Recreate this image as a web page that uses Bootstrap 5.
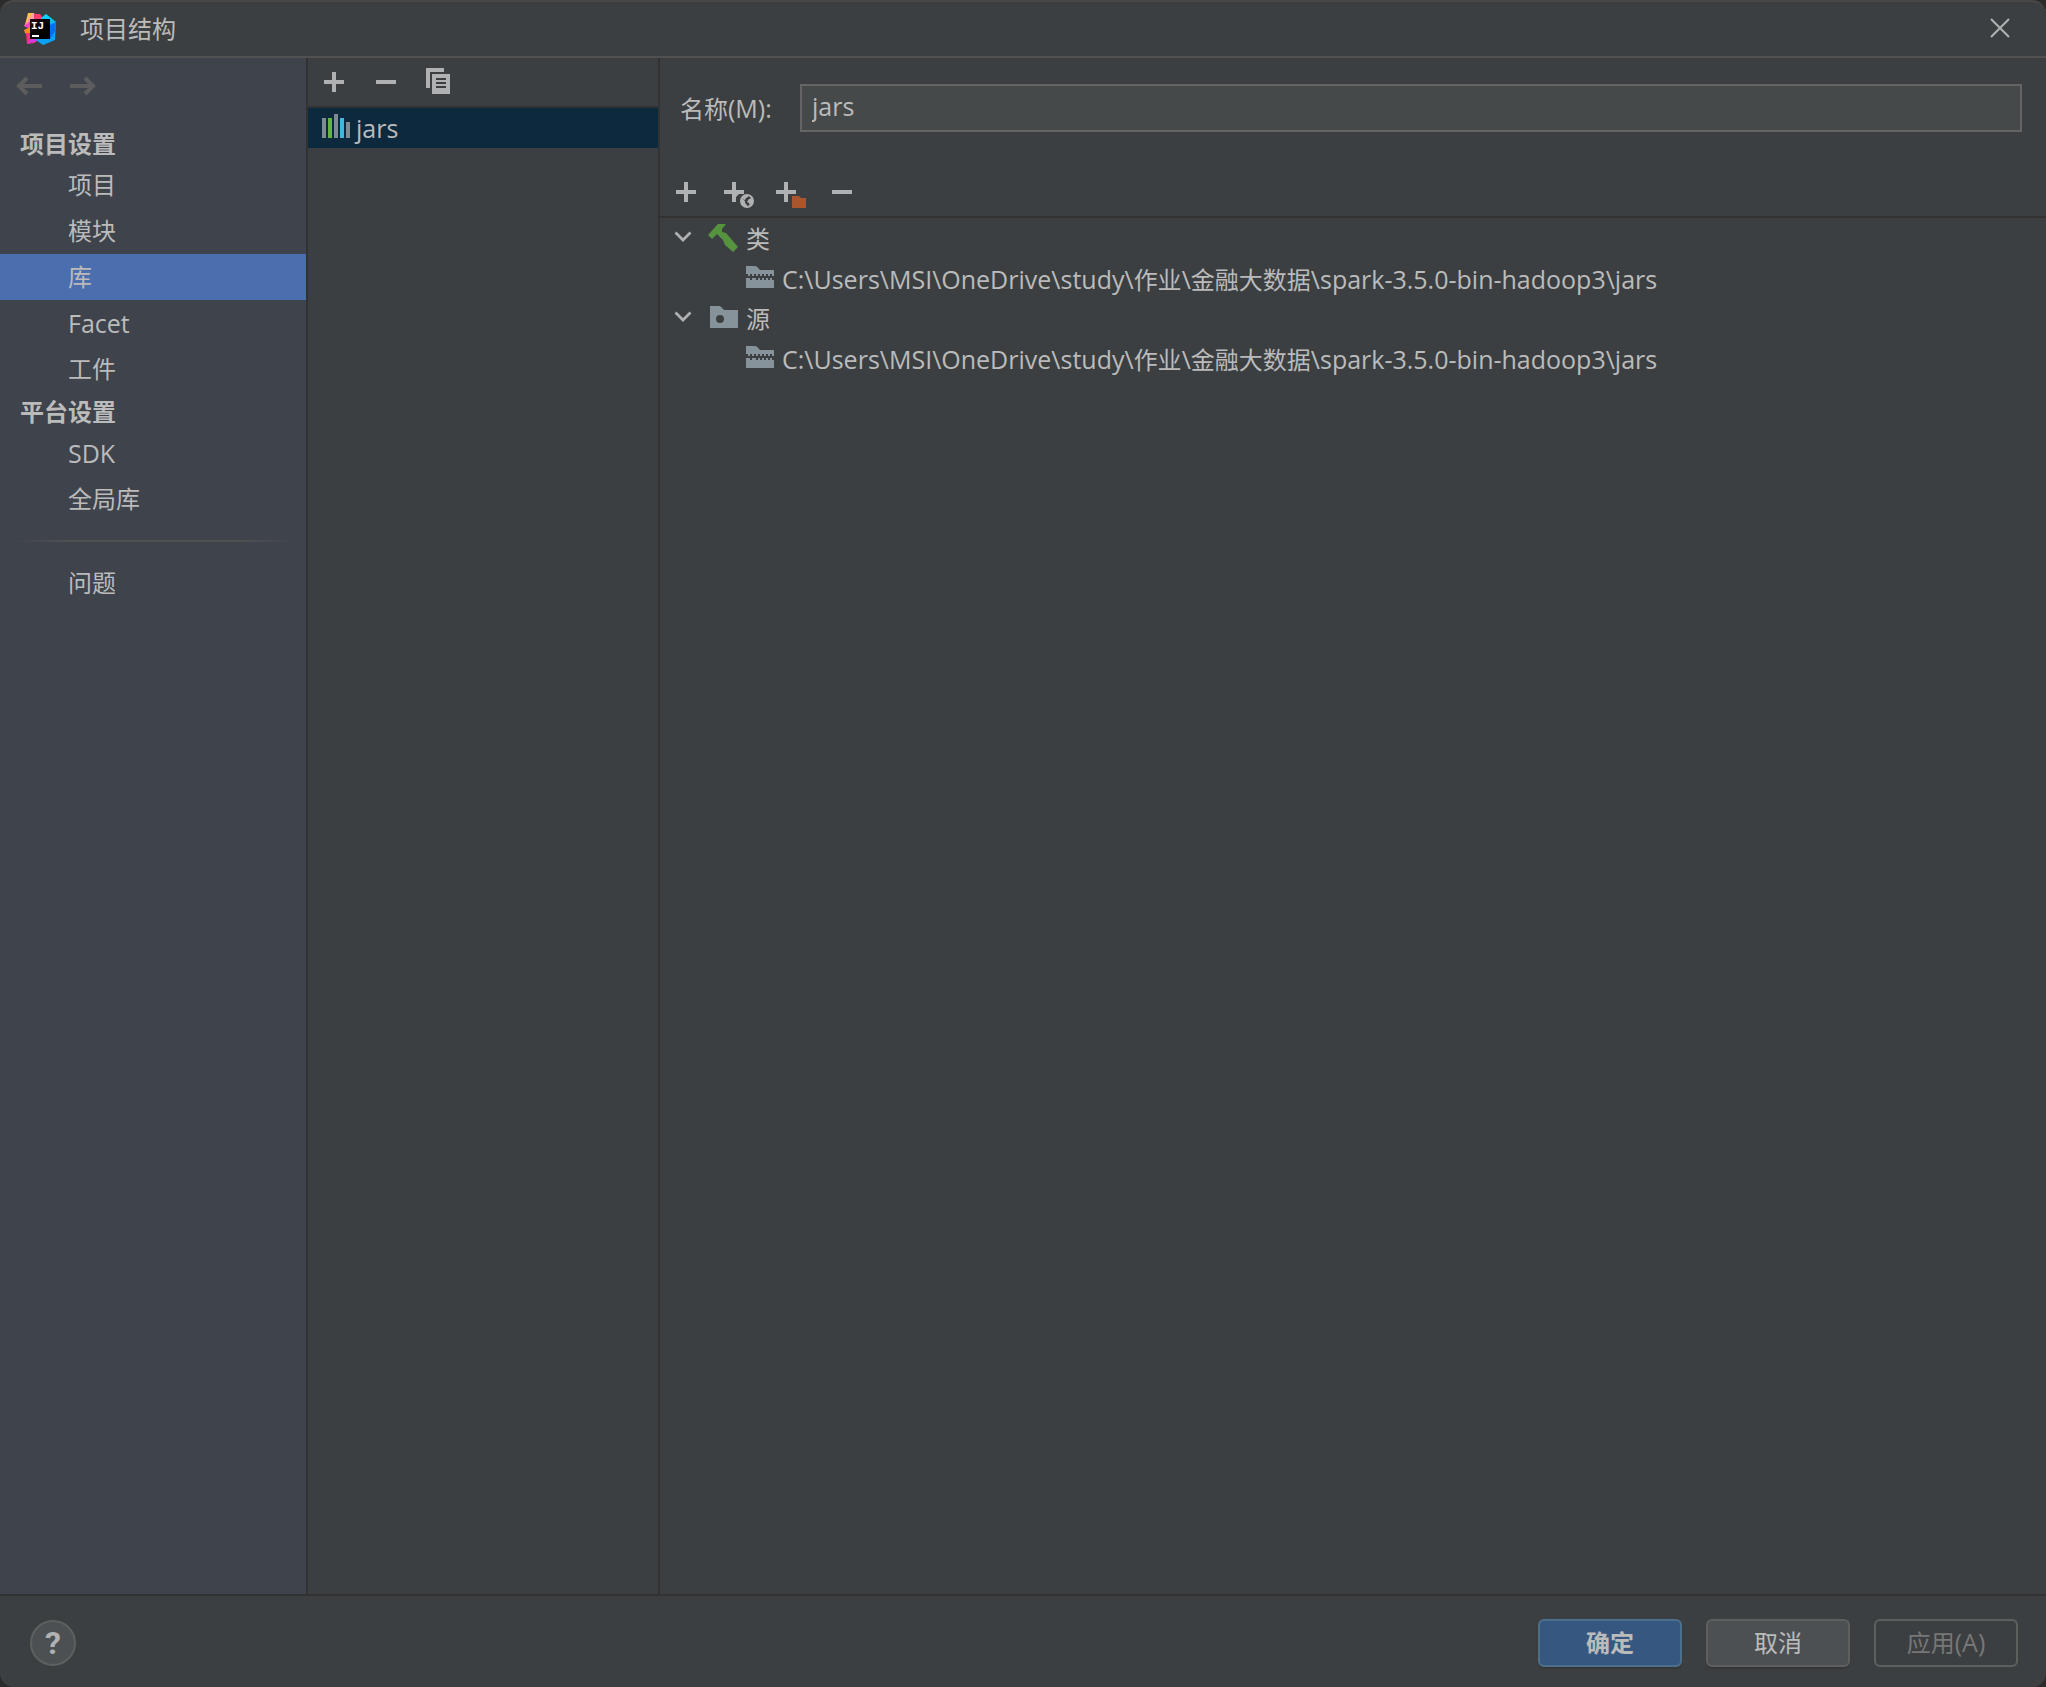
<!DOCTYPE html>
<html lang="zh-CN">
<head>
<meta charset="utf-8">
<meta name="viewport" content="width=device-width, initial-scale=1">
<title>项目结构</title>
<link rel="stylesheet" href="https://cdn.jsdelivr.net/npm/bootstrap@5.3.0/dist/css/bootstrap.min.css">
<style>
  :root { --panel: #3c3f41; --side: #3e434c; --line: #323232; --ink: #bbbbbb; --icon: #afb1b3; }
  body { background: #2b2b2b; color: var(--ink); font: 24px/32px "Open Sans", "Noto Sans CJK SC", sans-serif; }
  svg { display: block; flex: none; }
  .latin { font-size: 25px; }
  .han { font-size: 24px; }
  .dialog-frame { background: var(--panel); border-top: 2px solid #484848; border-radius: 14px; overflow: hidden; }
  .title-bar { height: 56px; border-bottom: 2px solid #515151; padding: 0 24px; }
  .icon-btn { background: none; border: 0; padding: 0; color: var(--icon); display: block; }
  .side-nav { width: 308px; background: var(--side); border-right: 2px solid var(--line); }
  .history { padding: 12px 12px 0; height: 66px; gap: 24px; }
  .history .icon-btn { color: #5c5c5c; }
  .group-title { font-size: 24px; line-height: 36px; font-weight: 700; padding: 2px 0 0 20px; margin: 0; }
  .side-nav .nav-link { color: var(--ink); line-height: 46px; padding: 0 0 0 68px; border-radius: 0; }
  .side-nav .nav-link.active { background: #4b6eaf; color: var(--ink); }
  .fade-rule { height: 2px; margin: 18px 12px; background: linear-gradient(90deg, transparent, #515151 20%, #515151 80%, transparent); }
  .lib-pane { width: 352px; border-right: 2px solid var(--line); }
  .lib-tools { height: 50px; padding: 0 10px; gap: 20px; border-bottom: 2px solid var(--line); }
  .lib-item { height: 40px; background: #0d293e; color: var(--ink); padding: 0 14px; gap: 6px; }
  .name-row { padding: 26px 24px 0 20px; }
  .name-row label { flex: 0 0 120px; }
  .name-row .form-control { height: 48px; background: #45494a; border: 2px solid #646464; border-radius: 0; color: var(--ink); font-size: 25px; line-height: 32px; padding: 0 10px 4px; }
  .root-tools { height: 50px; margin-top: 36px; padding: 0 10px; gap: 16px; border-bottom: 2px solid var(--line); }
  .tree-row { height: 40px; padding-left: 10px; }
  .tree-row .icon-btn { margin-right: 10px; }
  .tree-text { padding-top: 2px; margin-left: 6px; }
  .tree-child { padding-left: 86px; }
  .tree-child .tree-text { margin-left: 8px; }
  .footer-bar { height: 93px; border-top: 2px solid var(--line); padding: 2px 28px 0 30px; gap: 24px; }
  .help-btn { width: 46px; height: 46px; padding: 0; border: 2px solid #5e6060; border-radius: 50%; background: #4c5052; color: var(--icon); font: 700 32px/40px Roboto, sans-serif; }
  .dlg-btn { width: 144px; height: 48px; padding: 0; font-size: 24px; line-height: 32px; border: 2px solid #5e6060; border-radius: 6px; background: #4c5052; color: var(--ink); box-shadow: 0 2px 1px #363738; }
  .dlg-btn.ok { background: #365880; border-color: #4c708c; font-weight: 700; }
  .dlg-btn:disabled { background: transparent; color: #777777; border-color: #5e6060; opacity: 1; box-shadow: none; }
</style>
<script src="https://cdn.jsdelivr.net/npm/bootstrap@5.3.0/dist/js/bootstrap.bundle.min.js"></script>
</head>
<body>
<svg class="d-none" aria-hidden="true">
  <symbol id="plus" viewBox="0 0 32 32"><path fill="currentColor" d="M14 6h4v8h8v4h-8v8h-4v-8H6v-4h8z"/></symbol>
  <symbol id="minus" viewBox="0 0 32 32"><path fill="currentColor" d="M6 14h20v4H6z"/></symbol>
  <symbol id="chevron" viewBox="0 0 28 28"><path d="M5.500 8.500l7.500 7.500 7.500-7.500" fill="none" stroke="currentColor" stroke-width="2.800"/></symbol>
  <symbol id="archive" viewBox="0 0 28 24"><path fill="#87939a" d="M0 0h9q2 0 4 3l1 1h14v18H0z"/><path fill="#3c3f41" d="M0 8h2v2h2v-2h2v2h2v-2h2v2h2v-2h2v2h2v-2h2v2h2v-2h2v2h2v-2h2v2h2v4h-2v-2h-2v2h-2v-2h-2v2h-2v-2h-2v2h-2v-2h-2v2h-2v-2h-2v2H8v-2H6v2H4v-2H0z"/></symbol>
</svg>
<div class="dialog-frame d-flex flex-column vh-100">
  <header class="title-bar d-flex align-items-center">
    <svg width="32" height="32" viewBox="0 0 32 32" role="img" aria-label="IntelliJ IDEA">
      <defs>
        <linearGradient id="cool" x1="0" y1="0" x2="0" y2="1"><stop offset="0" stop-color="#12dcfa"/><stop offset=".5" stop-color="#1496fc"/><stop offset="1" stop-color="#0aa5f5"/></linearGradient>
        <linearGradient id="ink" x1="0" y1="0" x2="1" y2="1"><stop offset="0" stop-color="#2a1015"/><stop offset=".5" stop-color="#000"/></linearGradient>
      </defs>
      <path fill="#fcc24a" d="M4 0l6 0-2 8-7 4z"/>
      <path fill="#ff9fb0" d="M9 0l4 2-5 12-8-1z"/>
      <path fill="#fe3a6b" d="M10 1h6l4 6-10 3z"/>
      <path fill="#fe3fd0" d="M0 13l6-5v8z"/>
      <path fill="#fd8b1e" d="M0 17l6-3v10l-5-4z"/>
      <path fill="#fe2f7c" d="M2 20h6l8 6-6 4-7 1z"/>
      <path fill="#d338e8" d="M3 31l5-6 8 2z"/>
      <path fill="url(#cool)" d="M17 5l5-4 10 8-1 18-12 5-7-5z"/>
      <path fill="#0a6cf0" d="M26 12l6-3-1 9-5 8z"/>
      <path fill="url(#ink)" d="M6 6h20v20H6z"/>
      <path fill="#fff" d="M8 22h7v2H8z"/>
      <text x="7" y="16" fill="#fff" font-family="Liberation Mono" font-weight="700" font-size="11">IJ</text>
    </svg>
    <span class="ms-4">项目结构</span>
    <button class="icon-btn ms-auto me-2" aria-label="关闭"><svg width="28" height="28" viewBox="0 0 28 28"><path d="M5 4l18 18M23 4L5 22" stroke="currentColor" stroke-width="2"/></svg></button>
  </header>
  <div class="d-flex flex-grow-1">
    <nav class="side-nav flex-shrink-0">
      <div class="history d-flex align-items-start">
        <button class="icon-btn" aria-label="后退"><svg width="32" height="32" viewBox="0 0 32 32"><path d="M30 16H7M15 8l-8 8 8 8" fill="none" stroke="currentColor" stroke-width="4"/></svg></button>
        <button class="icon-btn" aria-label="前进"><svg width="32" height="32" viewBox="0 0 32 32"><path d="M2 16h23M17 8l8 8-8 8" fill="none" stroke="currentColor" stroke-width="4"/></svg></button>
      </div>
      <h2 class="group-title">项目设置</h2>
      <div class="nav nav-pills flex-column">
        <a class="nav-link" href="#">项目</a>
        <a class="nav-link" href="#">模块</a>
        <a class="nav-link active" aria-current="page" href="#">库</a>
        <a class="nav-link latin" href="#">Facet</a>
        <a class="nav-link" href="#">工件</a>
      </div>
      <h2 class="group-title">平台设置</h2>
      <div class="nav nav-pills flex-column">
        <a class="nav-link latin" href="#">SDK</a>
        <a class="nav-link" href="#">全局库</a>
      </div>
      <div class="fade-rule"></div>
      <div class="nav nav-pills flex-column"><a class="nav-link" href="#">问题</a></div>
    </nav>
    <section class="lib-pane flex-shrink-0">
      <div class="lib-tools d-flex align-items-center">
        <button class="icon-btn" aria-label="添加"><svg width="32" height="32"><use href="#plus"/></svg></button>
        <button class="icon-btn" aria-label="移除"><svg width="32" height="32"><use href="#minus"/></svg></button>
        <button class="icon-btn" aria-label="复制"><svg width="32" height="32" viewBox="0 0 32 32"><path fill="currentColor" fill-rule="evenodd" d="M4 2h18v4H8v16H4zM10 8h18v20H10zM14 12v2h10v-2zM14 16v2h10v-2zM14 20v2h10v-2z"/></svg></button>
      </div>
      <a class="lib-item latin d-flex align-items-center text-decoration-none" href="#">
        <svg width="28" height="28" viewBox="0 0 28 28"><path fill="#7f8b91" d="M0 4h4v20H0zM12 0h4v24h-4zM24 8h4v16h-4z"/><path fill="#62b543" d="M6 4h4v20H6z"/><path fill="#40b6e0" d="M18 4h4v20h-4z"/></svg>
        jars
      </a>
    </section>
    <main class="flex-grow-1">
      <form class="name-row d-flex align-items-center">
        <label for="lib-name">名称<span class="latin">(M):</span></label>
        <input id="lib-name" type="text" class="form-control" value="jars">
      </form>
      <div class="root-tools d-flex align-items-center">
        <button class="icon-btn" aria-label="添加"><svg width="32" height="32"><use href="#plus"/></svg></button>
        <button class="icon-btn" aria-label="添加文档 URL"><svg width="36" height="32" viewBox="0 0 36 32"><path fill="currentColor" d="M14 6h4v8h8v4h-5l-3 3v5h-4v-8H6v-4h8z"/><circle cx="29" cy="25" r="6" fill="none" stroke="currentColor" stroke-width="2"/><path fill="currentColor" d="M23 22l4 3v2l2 2v2l-4-1-2-4zM27 19l4 0-1 2-2 1-1 2-3-1zM31 23l3-1 1 4-3 4-1-3-2-1z"/></svg></button>
        <button class="icon-btn" aria-label="添加排除项"><svg width="36" height="32" viewBox="0 0 36 32"><path fill="currentColor" d="M14 6h4v8h8v4h-8v8h-4v-8H6v-4h8z"/><path fill="#3c3f41" d="M20 18h16v14H20z"/><path fill="currentColor" d="M18 14h8v4h-8z"/><path fill="#a9552e" d="M22 20h7l2 2h5v10H22z"/></svg></button>
        <button class="icon-btn" aria-label="移除"><svg width="36" height="32" viewBox="0 0 36 32"><path fill="currentColor" d="M10 14h20v4H10z"/></svg></button>
      </div>
      <div class="tree-row d-flex align-items-center">
        <button class="icon-btn" aria-label="折叠类"><svg width="28" height="28"><use href="#chevron"/></svg></button>
        <svg width="32" height="32" viewBox="0 0 32 32"><path fill="#56933f" d="M10 2h8l-4 5v3l4 1 12 14-5 5-8-7-2-5-6-6-5 5-4-4z"/></svg>
        <span class="tree-text">类</span>
      </div>
      <div class="tree-row tree-child d-flex align-items-center">
        <svg width="28" height="24"><use href="#archive"/></svg>
        <span class="tree-text latin">C:\Users\MSI\OneDrive\study\<span class="han">作业</span>\<span class="han">金融大数据</span>\spark-3.5.0-bin-hadoop3\jars</span>
      </div>
      <div class="tree-row d-flex align-items-center">
        <button class="icon-btn" aria-label="折叠源"><svg width="28" height="28"><use href="#chevron"/></svg></button>
        <svg width="32" height="24" viewBox="0 0 32 24"><path fill="#87939a" fill-rule="evenodd" d="M2 0h9q2 0 4 3l1 1h14v18H2zM12 9a4 4 0 1 0 0 8a4 4 0 1 0 0-8z"/></svg>
        <span class="tree-text">源</span>
      </div>
      <div class="tree-row tree-child d-flex align-items-center">
        <svg width="28" height="24"><use href="#archive"/></svg>
        <span class="tree-text latin">C:\Users\MSI\OneDrive\study\<span class="han">作业</span>\<span class="han">金融大数据</span>\spark-3.5.0-bin-hadoop3\jars</span>
      </div>
    </main>
  </div>
  <footer class="footer-bar d-flex align-items-center">
    <button class="help-btn" aria-label="帮助">?</button>
    <button class="dlg-btn ok ms-auto">确定</button>
    <button class="dlg-btn">取消</button>
    <button class="dlg-btn" disabled>应用<span class="latin">(A)</span></button>
  </footer>
</div>
</body>
</html>
